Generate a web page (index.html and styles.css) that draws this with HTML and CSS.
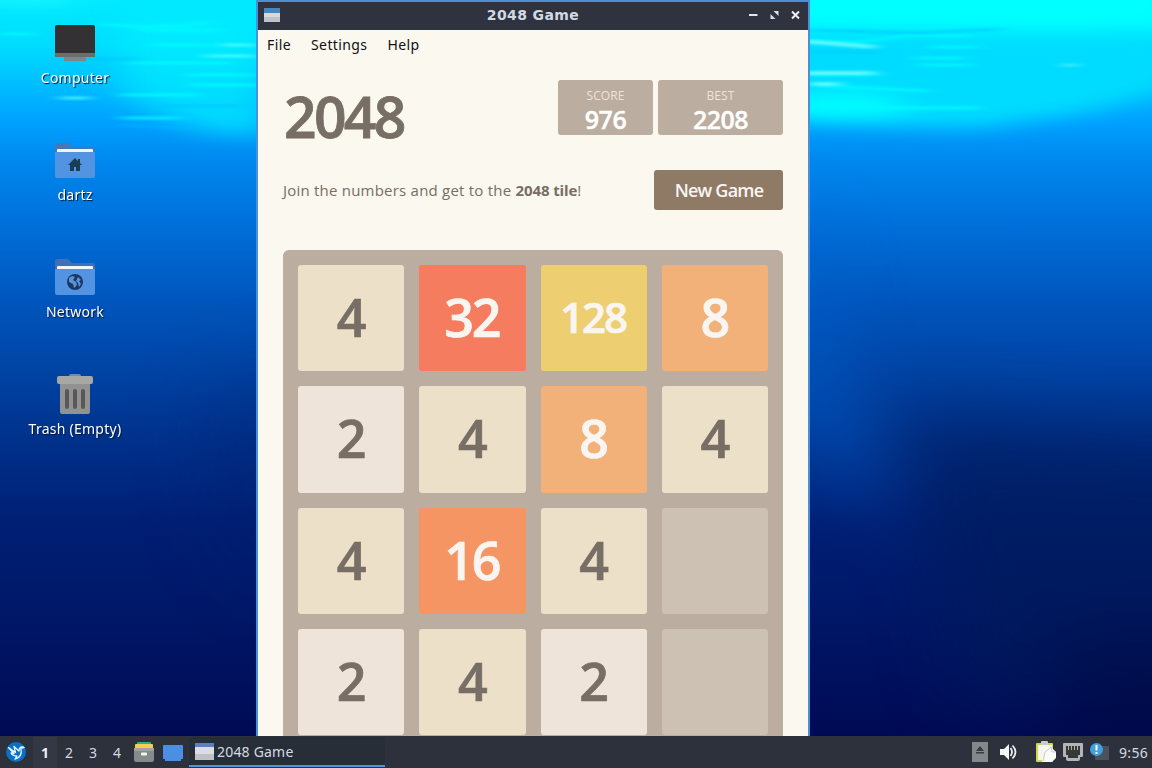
FILE: index.html
```html
<!DOCTYPE html>
<html lang="en">
<head>
    <meta charset="UTF-8">
    <meta name="viewport" content="width=device-width, initial-scale=1.0">
    <title>2048 Game</title>
    <link rel="stylesheet" href="styles.css">
</head>

<body>
    <div class="screen">
        <!-- Wallpaper -->
        <svg class="wallpaper" viewBox="0 0 1152 768" preserveAspectRatio="none">
            <defs>
                <linearGradient id="sea" x1="0" y1="0" x2="0" y2="1">
                    <stop offset="0" stop-color="#00eaff"/>
                    <stop offset=".06" stop-color="#00dcff"/>
                    <stop offset=".105" stop-color="#00c0ff"/>
                    <stop offset=".16" stop-color="#00a0ff"/>
                    <stop offset=".21" stop-color="#0088ee"/>
                    <stop offset=".29" stop-color="#0070da"/>
                    <stop offset=".39" stop-color="#0056bd"/>
                    <stop offset=".49" stop-color="#0042a2"/>
                    <stop offset=".58" stop-color="#00308a"/>
                    <stop offset=".68" stop-color="#001f74"/>
                    <stop offset=".8" stop-color="#001767"/>
                    <stop offset=".96" stop-color="#000a54"/>
                </linearGradient>
                <filter id="soft" x="-60%" y="-60%" width="220%" height="220%" color-interpolation-filters="sRGB"><feGaussianBlur stdDeviation="36"/></filter>
                <filter id="mid" x="-50%" y="-100%" width="200%" height="300%" color-interpolation-filters="sRGB"><feGaussianBlur stdDeviation="20 9"/></filter>
                <filter id="fine" x="-50%" y="-200%" width="200%" height="500%" color-interpolation-filters="sRGB"><feGaussianBlur stdDeviation="8 1.2"/></filter>
            </defs>
            <rect width="1152" height="768" fill="url(#sea)"/>
            <g filter="url(#mid)">
                <path d="M120 10h150v125l-60-2-50-18-40-25z" fill="#00eeff" opacity=".7"/>
                <path d="M780 -10h400v95l-90 26-110 16-100-2-100-5z" fill="#00dcff"/>
                <path d="M780 -20h400v50l-120 2-280-2z" fill="#00ffff"/>
                <path d="M780 94h95l40 14-40 11h-95z" fill="#00ffff"/>
                <path d="M-20 -20h110l-20 22H-20z" fill="#20f4ff"/>
            </g>
            <g filter="url(#fine)" fill="none" stroke="#00fbff" stroke-width="3" opacity=".8">
                <path d="M100 24q60 6 110-2M140 30h80M0 34h35M150 45h60M130 63h100M185 75h70M120 95h80M190 85h70M120 118h60"/>
                <path d="M800 40l60 2 50-7 60 1M930 47h50M915 58h50M920 65h50M800 75h80M820 86l110 5M870 108h110"/>
                <path d="M220 45h36M205 56h50M60 98h30" stroke="#4fffff"/>
                <path d="M800 41l75 6M800 73h75M810 84h30" stroke="#78ffff" stroke-width="4"/>
                <path d="M1065 65h10" stroke="#8ff"/>
                <path d="M810 30l110 3 80-4M800 52h80" stroke="#00cfff"/>
                <path d="M60 59h80M160 106h80M120 125l80 4" stroke="#00bcff" opacity=".6"/>
            </g>
            <g filter="url(#soft)">
                <path d="M900 420l340 20v260H970z" fill="#001a58" opacity=".6"/>
                <path d="M780 230h30l30 150 50 130-60-40-50-60z" fill="#0062d2" opacity=".6"/>
                <path d="M195 400l120-50v260l-90-60z" fill="#001a68" opacity=".25"/>
                <path d="M1060 630h160v150h-180z" fill="#000640" opacity=".5"/>
            </g>
        </svg>

        <!-- Desktop icons -->
        <div class="desktop">
            <div class="desktop-icon">
                <svg width="48" height="48" viewBox="0 0 48 48">
                    <path d="M13 36h22v4q0 1-1 1H14q-1 0-1-1z" fill="#7f8588"/>
                    <rect x="4" y="5" width="40" height="32" rx="2" fill="#343134"/>
                    <path d="M4 33h40v2q0 2-2 2H6q-2 0-2-2z" fill="#6e6b6b"/>
                </svg>
                <span>Computer</span>
            </div>
            <div class="desktop-icon">
                <svg width="48" height="48" viewBox="0 0 48 48">
                    <path d="M4 9q0-3 3-3h10l4 4h21q2 0 2 2v12H4z" fill="#4577b9"/>
                    <rect x="6" y="12" width="36" height="8" rx="1" fill="#f2f5f7"/>
                    <path d="M4 15h40v24q0 2-2 2H6q-2 0-2-2z" fill="#5294e2"/>
                    <path d="M24 21l7 7h-2v6h-4v-4h-2v4h-4v-6h-2z" fill="#193d55"/>
                    <path d="M27 22h2v4h-2z" fill="#193d55"/>
                </svg>
                <span>dartz</span>
            </div>
            <div class="desktop-icon">
                <svg width="48" height="48" viewBox="0 0 48 48">
                    <path d="M4 8q0-3 3-3h10l4 4h21q2 0 2 2v12H4z" fill="#3d72b9"/>
                    <rect x="6" y="12" width="36" height="8" rx="1" fill="#f2f5f7"/>
                    <path d="M4 15h40v24q0 2-2 2H6q-2 0-2-2z" fill="#5294e2"/>
                    <circle cx="24" cy="28" r="8" fill="#183967"/>
                    <path d="M18 24l3-2 3 1-2 3 3 2 1 3-3 3-1-4-4-2zM27 23l3 3-2 1 2 3-2 3-1-4-2-2z" fill="#5c93d4"/>
                </svg>
                <span>Network</span>
            </div>
            <div class="desktop-icon">
                <svg width="48" height="48" viewBox="0 0 48 48">
                    <path d="M18 5q0-2 2-2h8q2 0 2 2v2H18z" fill="#778ba4"/>
                    <path d="M9 12h30v29q0 2-2 2H11q-2 0-2-2z" fill="#929292"/>
                    <rect x="6" y="5" width="36" height="8" rx="2" fill="#a7a7a5"/>
                    <path d="M16 20v16M24 20v16M32 20v16" stroke="#585858" stroke-width="4" stroke-linecap="round"/>
                </svg>
                <span>Trash (Empty)</span>
            </div>
        </div>

        <!-- Game window -->
        <div class="window">
            <div class="titlebar">
                <svg class="app-icon" width="16" height="14" viewBox="0 0 16 14">
                    <rect width="16" height="14" fill="#d6dade"/>
                    <rect width="16" height="5" fill="#4786bd"/>
                    <rect y="9" width="16" height="5" fill="#bfc2c7"/>
                </svg>
                <div class="title">2048 Game</div>
                <div class="controls">
                    <svg width="9" height="10" viewBox="0 0 9 10"><path d="M0 5h8.500" stroke="#e2e5ea" stroke-width="2"/></svg>
                    <svg width="9" height="10" viewBox="0 0 9 10"><path d="M3.500 1H8.500V6zM0.500 4V9H5.500z" fill="#dde0e6"/></svg>
                    <svg width="9" height="10" viewBox="0 0 9 10"><path d="M1 1.500l7 7M8 1.500l-7 7" stroke="#eceef2" stroke-width="2"/></svg>
                </div>
            </div>
            <div class="menubar">
                <span>File</span>
                <span>Settings</span>
                <span>Help</span>
            </div>
            <div class="game">
                <div class="heading">
                    <h1>2048</h1>
                    <div class="scores">
                        <div class="score">
                            <div class="score-label">SCORE</div>
                            <div class="score-value">976</div>
                        </div>
                        <div class="score score-best">
                            <div class="score-label">BEST</div>
                            <div class="score-value">2208</div>
                        </div>
                    </div>
                </div>
                <div class="intro">
                    <p>Join the numbers and get to the <b>2048 tile</b>!</p>
                    <button class="new-game">New Game</button>
                </div>
                <div class="board">
                    <div class="tile tile-4">4</div>
                    <div class="tile tile-32">32</div>
                    <div class="tile tile-128">128</div>
                    <div class="tile tile-8">8</div>
                    <div class="tile tile-2">2</div>
                    <div class="tile tile-4">4</div>
                    <div class="tile tile-8">8</div>
                    <div class="tile tile-4">4</div>
                    <div class="tile tile-4">4</div>
                    <div class="tile tile-16">16</div>
                    <div class="tile tile-4">4</div>
                    <div class="tile"></div>
                    <div class="tile tile-2">2</div>
                    <div class="tile tile-4">4</div>
                    <div class="tile tile-2">2</div>
                    <div class="tile"></div>
                </div>
            </div>
        </div>

        <!-- Panel -->
        <div class="panel">
            <svg class="start" width="20" height="20" viewBox="0 0 20 20">
                <circle cx="10" cy="10" r="10" fill="#0870c8"/>
                <path d="M2.500 5.500l7 5L8 4.500l5 4.500c0-4 3-5 5-3.500l-3 .5c1 6-1 10-6 11l2-3c-4 0-5-1-6-3l3 .500z" fill="none" stroke="#e8f6ff" stroke-width="1.300" stroke-linejoin="round"/>
            </svg>
            <div class="workspaces">
                <span class="active">1</span>
                <span>2</span>
                <span>3</span>
                <span>4</span>
            </div>
            <svg class="files" width="20" height="20" viewBox="0 0 20 20">
                <rect x="3" y="0" width="14" height="5" rx="1" fill="#36a69a"/>
                <rect x="1" y="2" width="18" height="6" rx="1" fill="#f0d04e"/>
                <path d="M1 6h18l1 3v9q0 2-2 2H2q-2 0-2-2V9z" fill="#858a8a"/>
                <rect x="0" y="6" width="20" height="3" fill="#a2a29c"/>
                <rect x="7" y="10.500" width="6" height="3" rx="1" fill="#f4f4f4"/>
            </svg>
            <svg class="show-desktop" width="20" height="18" viewBox="0 0 20 18">
                <path d="M1 1h18q1 0 1 1v13h-2v2H2v-2H0V2q0-1 1-1z" fill="#4b8fe2"/>
            </svg>
            <div class="task">
                <svg width="19" height="17" viewBox="0 0 19 17">
                    <rect width="19" height="17" fill="#dadde1"/>
                    <rect width="19" height="4" fill="#5d7fbd"/>
                    <rect y="11" width="19" height="6" fill="#bfc1c5"/>
                </svg>
                <span>2048 Game</span>
            </div>
            <div class="tray">
                <svg width="16" height="20" viewBox="0 0 16 20">
                    <rect width="16" height="20" fill="#85888b"/>
                    <path d="M8 4l4 5H4zM4 10h8v1.500H4z" fill="#383c42"/>
                </svg>
                <svg class="volume" width="18" height="16" viewBox="0 0 18 16">
                    <path d="M0 5h4l5-5v16l-5-5H0z" fill="#f5f6f8"/>
                    <path d="M10.500 4q3 4 0 8M12.500 1.500q6 6.500 0 13" fill="none" stroke="#e9ebef" stroke-width="1.800"/>
                </svg>
                <svg class="clipboard" width="20" height="22" viewBox="0 0 20 22">
                    <rect x="0" y="2" width="17" height="19" rx="1" fill="#ced653"/>
                    <rect x="2" y="4" width="14" height="15" fill="#f4f5ed"/>
                    <rect x="5" y="0" width="7" height="4" rx="1" fill="#c7cbcb"/>
                    <path d="M8 6h7l5 5v6l-4 4H6z" fill="#fafaf6"/>
                    <path d="M7 20l2-9 6-5 1 5h4" fill="none" stroke="#c8cbc3"/>
                </svg>
                <svg class="network" width="20" height="18" viewBox="0 0 20 18">
                    <path d="M1 0h18q1 0 1 1v12q0 1-1 1h-2v2q0 2-2 2H5q-2 0-2-2v-2H1q-1 0-1-1V1q0-1 1-1z" fill="#b3b4b6"/>
                    <path d="M3 3h14v9h-2v3H5v-3H3z" fill="#343a3c"/>
                    <path d="M5.500 3v4M8.500 3v4M11.500 3v4M14.500 3v4" stroke="#b8b390"/>
                </svg>
                <svg class="update" width="19" height="18" viewBox="0 0 19 18">
                    <rect x="5" y="3" width="14" height="14" rx="1" fill="#4a5260"/>
                    <circle cx="6.500" cy="6.500" r="6.500" fill="#42a0dc"/>
                    <path d="M6.500 2v5.500M6.500 9v2" stroke="#fff" stroke-width="2"/>
                </svg>
                <span class="clock">9:56</span>
            </div>
        </div>
    </div>
</body>

</html>
```
FILE: styles.css
```css
body {
    margin: 0;
    font-family: 'Open Sans', 'Noto Sans', sans-serif;
}

.screen {
    position: relative;
    width: 1152px;
    height: 768px;
    overflow: hidden;
    background-color: #001465;
}

.wallpaper {
    position: absolute;
    width: 1152px;
    height: 768px;
}

/* Desktop icons */
.desktop {
    position: absolute;
    left: 15px;
    top: 20px;
    width: 120px;
}

.desktop-icon {
    height: 117px;
    display: flex;
    flex-direction: column;
    align-items: center;
    color: white;
    font-family: 'Noto Sans', sans-serif;
    font-size: 14px;
    line-height: 20px;
    letter-spacing: 0.25px;
    text-shadow: 1px 1px 1px #001830;
}

/* Window */
.window {
    position: absolute;
    left: 256px;
    top: 0;
    width: 550px;
    height: 734px;
    overflow: hidden;
    border: 2px solid #4a90d9;
    border-bottom: none;
    background-color: #fbf8ef;
}

.titlebar {
    display: flex;
    align-items: center;
    box-sizing: border-box;
    height: 28px;
    padding: 0 8px 2px 6px;
    background-color: #2f3340;
}

.title {
    flex: 1;
    padding-left: 37px;
    color: #d3dae3;
    text-align: center;
    font-family: 'DejaVu Sans', sans-serif;
    font-size: 14px;
    font-weight: bold;
    letter-spacing: 0.4px;
    line-height: 26px;
}

.controls {
    display: flex;
    gap: 12px;
}

.menubar {
    display: flex;
    gap: 20px;
    height: 30px;
    padding-left: 9px;
    font-family: 'Noto Sans', sans-serif;
    font-size: 14px;
    letter-spacing: 0.4px;
    line-height: 29px;
    color: #111;
}

.game {
    width: 500px;
    margin: 20px auto 0;
    color: #776e65;
}

.heading {
    display: flex;
    justify-content: space-between;
    height: 90px;
}

h1 {
    margin: 0 0 0 1px;
    font-size: 57px;
    font-weight: 600;
    line-height: 73px;
    letter-spacing: -2.7px;
    color: #776e65;
    -webkit-text-stroke: 0.8px;
}

.scores {
    display: flex;
    gap: 5px;
}

.score {
    width: 95px;
    height: 55px;
    border-radius: 3px;
    background-color: #bbada0;
    text-align: center;
}

.score-best {
    width: 125px;
}

.score-label {
    padding-top: 7px;
    font-size: 12px;
    line-height: 17px;
    letter-spacing: 0.1px;
    color: #eee4da;
}

.score-value {
    font-size: 25px;
    font-weight: 600;
    line-height: 31px;
    letter-spacing: -0.5px;
    color: white;
    -webkit-text-stroke: 0.4px;
}

.intro {
    display: flex;
    justify-content: space-between;
    height: 80px;
}

.intro p {
    margin: 0;
    font-size: 15px;
    letter-spacing: 0.22px;
    line-height: 40px;
}

.intro b {
    letter-spacing: -0.1px;
}

.new-game {
    width: 129px;
    height: 40px;
    padding: 0 0 0 1px;
    border: none;
    border-radius: 3px;
    background-color: #8f7a66;
    color: #f9f6f2;
    font-family: inherit;
    font-size: 18px;
    font-weight: 600;
    letter-spacing: -0.8px;
}

/* Board */
.board {
    display: grid;
    grid-template-columns: repeat(4, 1fr);
    grid-auto-rows: 106.25px;
    gap: 15px;
    height: 470px;
    padding: 15px;
    border-radius: 6px;
    background-color: #bbada0;
}

.tile {
    border-radius: 3px;
    background-color: #cdc1b4;
    text-align: center;
    font-size: 52px;
    font-weight: 600;
    line-height: 104px;
    letter-spacing: -2px;
    text-indent: -1px;
    -webkit-text-stroke: 0.7px;
}

.tile-2 {
    background-color: #eee4da;
}

.tile-4 {
    background-color: #ede0c8;
}

.tile-8 {
    background-color: #f2b179;
    color: #f9f6f2;
}

.tile-16 {
    background-color: #f59563;
    color: #f9f6f2;
}

.tile-32 {
    background-color: #f67c5f;
    color: #f9f6f2;
}

.tile-128 {
    background-color: #edcf72;
    color: #f9f6f2;
    font-size: 42px;
}

/* Panel */
.panel {
    position: absolute;
    left: 0;
    top: 736px;
    display: flex;
    align-items: center;
    box-sizing: border-box;
    width: 1152px;
    height: 32px;
    padding: 0 4px 0 6px;
    background-color: #2c313c;
    color: #d3dae3;
    font-family: 'Noto Sans', sans-serif;
    font-size: 14px;
}

.workspaces {
    display: flex;
    margin-left: 7px;
}

.workspaces span {
    width: 24px;
    line-height: 31px;
    text-align: center;
}

.workspaces .active {
    background-color: #343844;
    font-weight: bold;
    color: #eceff4;
}

.files {
    margin-left: 5px;
}

.show-desktop {
    margin: 2px 0 0 9px;
}

.task {
    display: flex;
    align-items: center;
    gap: 3px;
    box-sizing: border-box;
    width: 196px;
    height: 30px;
    margin-left: 6px;
    padding-left: 6px;
    border-bottom: 2px solid #5294e2;
    background-color: #282e38;
    letter-spacing: 0.2px;
}

.tray {
    display: flex;
    align-items: center;
    margin-left: auto;
}

.volume {
    margin-left: 12px;
}

.clipboard {
    margin-left: 18px;
}

.network {
    margin-left: 7px;
}

.update {
    margin-left: 7px;
}

.clock {
    margin-left: 10px;
    letter-spacing: 0.3px;
}
```
